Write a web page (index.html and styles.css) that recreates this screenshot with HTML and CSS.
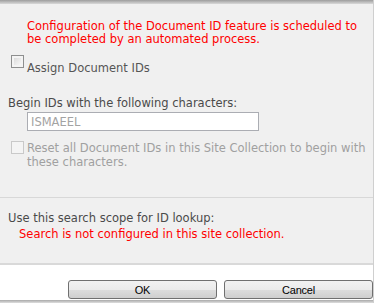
FILE: index.html
```html
<!DOCTYPE html>
<html lang="en">
  <head>
    <meta charset="UTF-8" />
    <title>Document ID Settings</title>
    <link rel="stylesheet" href="styles.css">
  </head>
  <body>
    <section class="dialog">
      <div class="topbar"></div>
      <div class="content">
        <p class="warning first">Configuration of the Document ID feature is scheduled to be completed by an automated process.</p>

        <div class="checkrow assign">
          <input type="checkbox" class="check" id="assign" />
          <label for="assign" class="assignlabel">Assign Document IDs</label>
        </div>

        <p class="label">Begin IDs with the following characters:</p>
        <input type="text" class="prefix" value="ISMAEEL" disabled />

        <div class="checkrow reset">
          <input type="checkbox" class="check" id="reset" disabled />
          <label for="reset" class="disabledlabel">Reset all Document IDs in this Site Collection to begin with these characters.</label>
        </div>
      </div>

      <div class="content scope">
        <p class="label">Use this search scope for ID lookup:</p>
        <p class="warning searchwarn">Search is not configured in this site collection.</p>
      </div>

      <div class="footer">
        <button class="knap">OK</button>
        <button class="knap">Cancel</button>
      </div>
      <div class="bottomshadow"></div>
    </section>
  </body>
</html>
```

FILE: styles.css
```css
body {
  margin: 0;
  padding: 0;
  background-color: #ffffff;
  font-family: "DejaVu Sans", Verdana, sans-serif;
  font-size: 11.5px;
  line-height: 14px;
}

p {
  margin: 0;
}

.dialog {
  width: 373px;
  border-right: 1px solid #cfcfcf;
}

.topbar {
  height: 4px;
  background: linear-gradient(#9d9d9d, #d9d9d9);
}

.content {
  background-color: #f0f0f0;
  padding: 16px 2px 28px 8px;
  border-bottom: 1px solid #d8d8d8;
}

.warning {
  color: #ff0000;
  margin-left: 19px;
}

.first {
  line-height: 13px;
  max-width: 336px;
}

.checkrow {
  display: flex;
  align-items: flex-start;
  margin-left: 3px;
  gap: 3px;
}

.assign {
  margin-top: 9px;
}

.assignlabel {
  color: #555555;
  padding-top: 6px;
}

.check {
  appearance: none;
  margin: 0;
  width: 13px;
  height: 13px;
  flex: none;
  border: 1px solid #8e8f8f;
  background: linear-gradient(135deg, #d4d4d4, #ffffff);
  box-shadow: inset 0 0 0 2px #f4f4f4;
}

.check:disabled {
  border-color: #c9c9c9;
  background: #f4f4f4;
  box-shadow: none;
}

.label {
  color: #4a4a4a;
}

.assign + .label {
  margin-top: 21px;
}

.prefix {
  display: block;
  box-sizing: border-box;
  margin: 2px 0 0 19px;
  width: 232px;
  height: 19px;
  padding: 0 3px;
  border: 1px solid #abadb3;
  background-color: #ffffff;
  font-family: "DejaVu Sans", Verdana, sans-serif;
  font-size: 11.5px;
  color: #a3a3a3;
}

.reset {
  margin-top: 10px;
}

.disabledlabel {
  color: #a0a0a0;
}

.scope {
  padding-top: 13px;
  padding-bottom: 22px;
  border-bottom: 2px solid #d9d9d9;
}

.searchwarn {
  margin-left: 11px;
  margin-top: 2px;
}

.footer {
  background-color: #ffffff;
  display: flex;
  justify-content: flex-end;
  gap: 7px;
  padding: 15px 0 1px 0;
}

.knap {
  width: 149px;
  height: 19px;
  padding: 0;
  border: 1px solid #707070;
  border-radius: 3px;
  background: linear-gradient(#f2f2f2, #ebebeb 50%, #dddddd 51%, #cfcfcf);
  font-family: "Liberation Sans", Arial, sans-serif;
  font-size: 11px;
  letter-spacing: -0.2px;
  color: #000000;
}

.bottomshadow {
  height: 3px;
  background: linear-gradient(#a9a9a9, #dedede);
}
```
